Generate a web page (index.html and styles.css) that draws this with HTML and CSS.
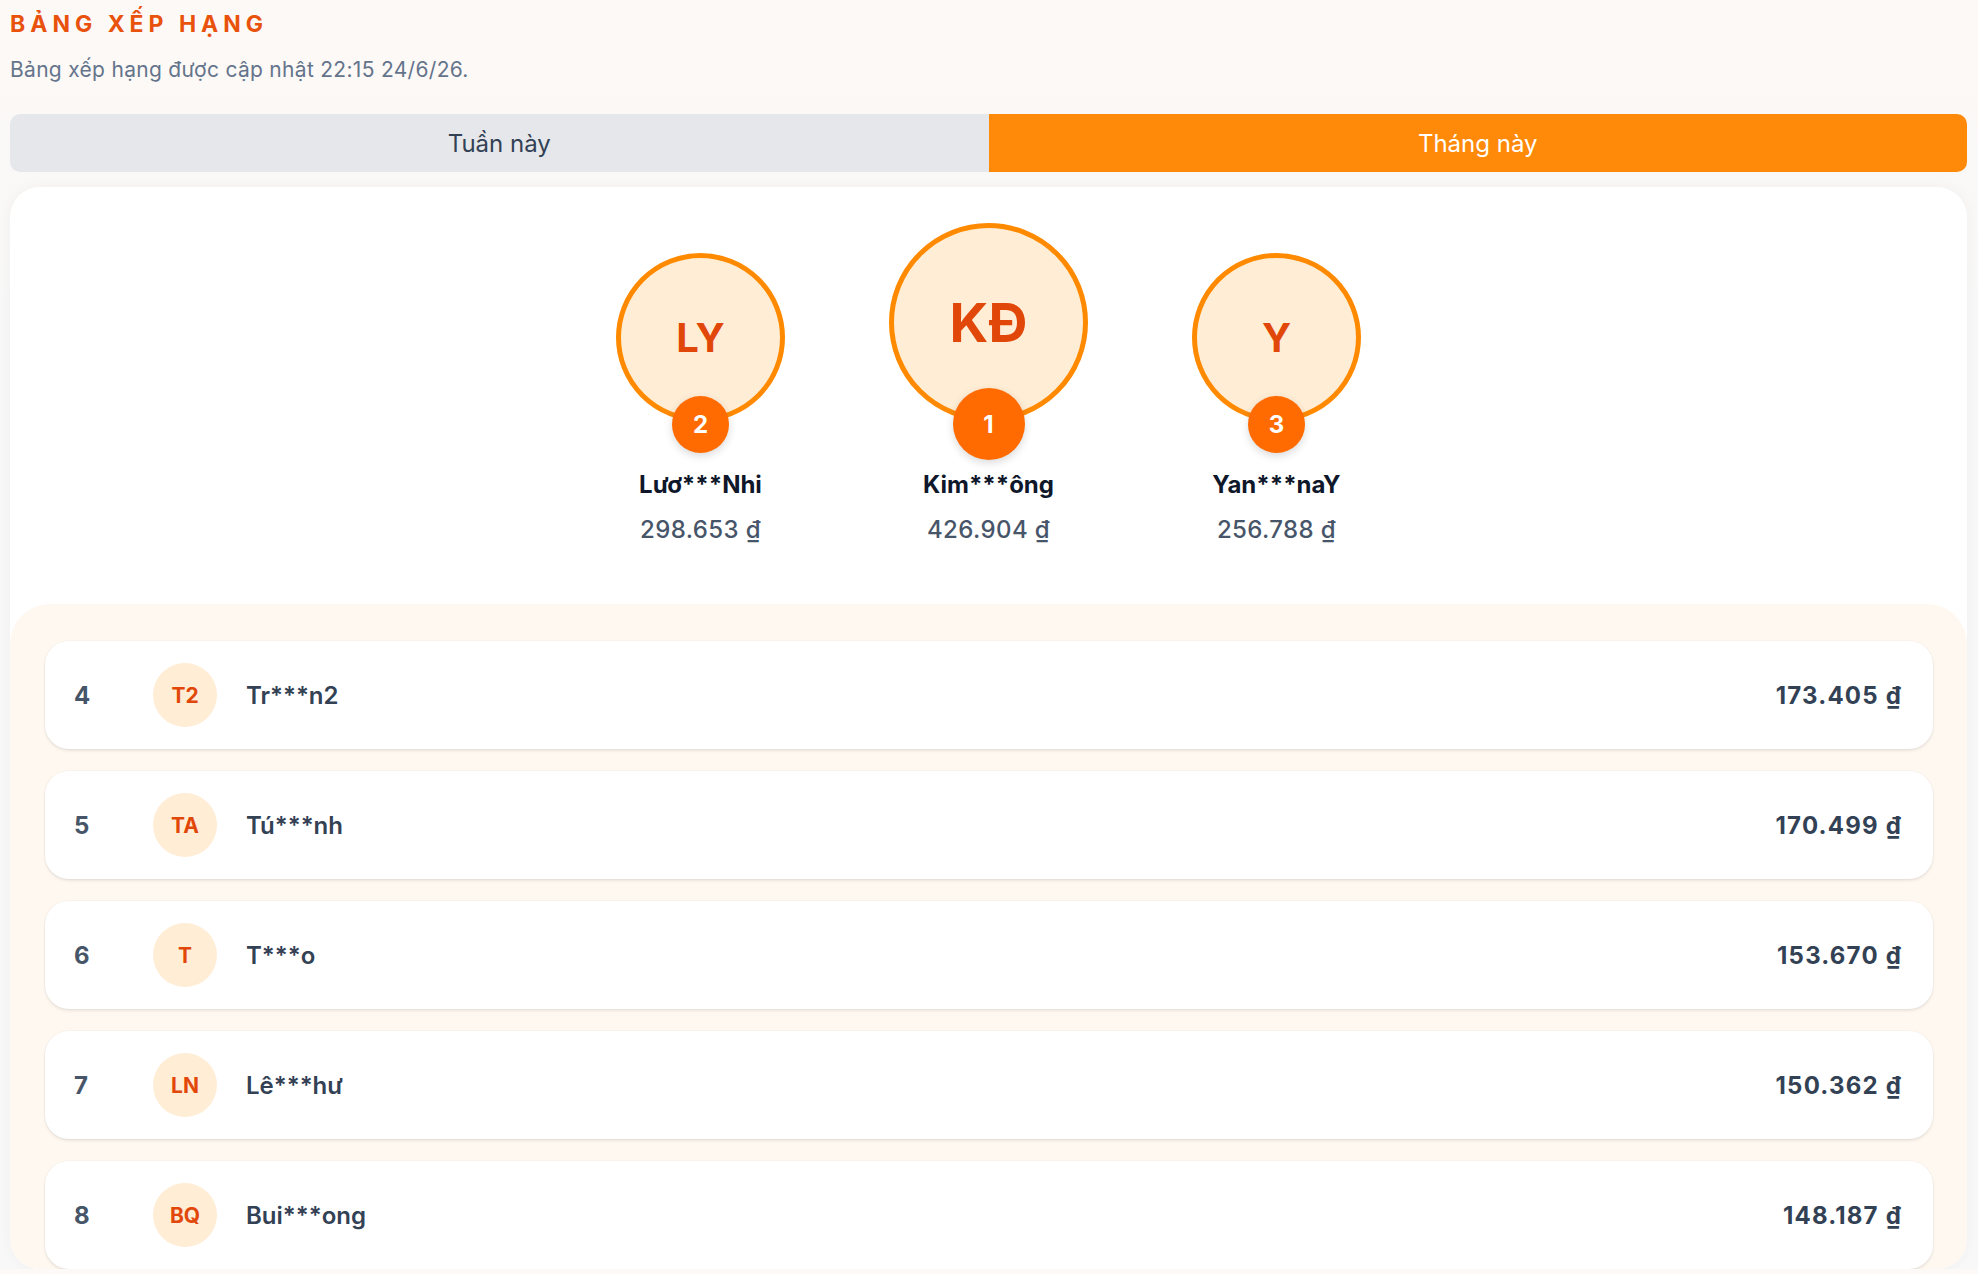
FILE: index.html
```html
<!DOCTYPE html>
<html lang="vi">
<head>
    <meta charset="UTF-8">
    <meta name="viewport" content="width=device-width, initial-scale=1.0">
    <title>Bảng xếp hạng</title>
    <link rel="stylesheet" href="styles.css">
</head>
<body>
    <div class="page">
        <h1 class="title">BẢNG XẾP HẠNG</h1>
        <p class="updated">Bảng xếp hạng được cập nhật 22:15 24/6/26.</p>

        <div class="tabs">
            <button class="tab">Tuần này</button>
            <button class="tab active">Tháng này</button>
        </div>

        <div class="board">
            <!-- top 3 -->
            <div class="podium">
                <div class="podium-item">
                    <div class="podium-avatar">
                        <span>LY</span>
                        <div class="badge">2</div>
                    </div>
                    <div class="podium-name">Lươ***Nhi</div>
                    <div class="podium-amount">298.653 ₫</div>
                </div>
                <div class="podium-item first">
                    <div class="podium-avatar">
                        <span>KĐ</span>
                        <div class="badge">1</div>
                    </div>
                    <div class="podium-name">Kim***ông</div>
                    <div class="podium-amount">426.904 ₫</div>
                </div>
                <div class="podium-item">
                    <div class="podium-avatar">
                        <span>Y</span>
                        <div class="badge">3</div>
                    </div>
                    <div class="podium-name">Yan***naY</div>
                    <div class="podium-amount">256.788 ₫</div>
                </div>
            </div>

            <!-- rest of the ranking -->
            <div class="list">
                <div class="row">
                    <span class="rank">4</span>
                    <span class="avatar">T2</span>
                    <span class="name">Tr***n2</span>
                    <span class="amount">173.405 ₫</span>
                </div>
                <div class="row">
                    <span class="rank">5</span>
                    <span class="avatar">TA</span>
                    <span class="name">Tú***nh</span>
                    <span class="amount">170.499 ₫</span>
                </div>
                <div class="row">
                    <span class="rank">6</span>
                    <span class="avatar">T</span>
                    <span class="name">T***o</span>
                    <span class="amount">153.670 ₫</span>
                </div>
                <div class="row">
                    <span class="rank">7</span>
                    <span class="avatar">LN</span>
                    <span class="name">Lê***hư</span>
                    <span class="amount">150.362 ₫</span>
                </div>
                <div class="row">
                    <span class="rank">8</span>
                    <span class="avatar">BQ</span>
                    <span class="name">Bui***ong</span>
                    <span class="amount">148.187 ₫</span>
                </div>
            </div>
        </div>
    </div>
</body>
</html>
```

FILE: styles.css
```css
body {
    margin: 0;
    padding: 0;
    font-family: Inter, "Noto Sans", sans-serif;
    background: linear-gradient(180deg, #fdf9f6 0, #f8f8f8 320px);
    color: #334155;
}

.page {
    padding: 10px 11px 0 10px;
}

.title {
    margin: 0;
    font-size: 23px;
    line-height: 28px;
    font-weight: 700;
    letter-spacing: 5px;
    color: #e8520c;
}

.updated {
    margin: 18px 0 0;
    font-size: 21px;
    line-height: 28px;
    letter-spacing: 0.3px;
    color: #64748b;
}

.tabs {
    display: flex;
    margin-top: 30px;
    border-radius: 10px;
    overflow: hidden;
}

.tab {
    flex: 1;
    height: 58px;
    border: none;
    font-family: inherit;
    font-size: 24px;
    background-color: #e5e7eb;
    color: #334155;
    cursor: pointer;
}

.tab.active {
    background-color: #ff8a0a;
    color: white;
}

.board {
    margin-top: 15px;
    background-color: white;
    border-radius: 30px;
    box-shadow: 0 0 14px rgba(0, 0, 0, 0.04);
    overflow: hidden;
}

.podium {
    display: flex;
    justify-content: center;
    align-items: flex-end;
    gap: 48px;
    padding-top: 36px;
}

.podium-item {
    width: 240px;
    display: flex;
    flex-direction: column;
    align-items: center;
}

.podium-avatar {
    position: relative;
    width: 169px;
    height: 169px;
    box-sizing: border-box;
    border: 5px solid #ff8a00;
    border-radius: 50%;
    background-color: #ffedd5;
    display: flex;
    justify-content: center;
    align-items: center;
    font-size: 40px;
    font-weight: 700;
    color: #e2470a;
    margin-bottom: 48px;
}

.first .podium-avatar {
    width: 199px;
    height: 199px;
    font-size: 54px;
}

.badge {
    position: absolute;
    left: 50%;
    bottom: -36px;
    width: 57px;
    height: 57px;
    margin-left: -28.5px;
    border-radius: 50%;
    background-color: #ff6b00;
    color: white;
    font-size: 24px;
    font-weight: 700;
    display: flex;
    justify-content: center;
    align-items: center;
    box-shadow: 0 3px 8px rgba(0, 0, 0, 0.15);
}

.first .badge {
    width: 72px;
    height: 72px;
    margin-left: -36px;
    bottom: -43px;
}

.podium-name {
    font-size: 24px;
    line-height: 30px;
    font-weight: 700;
    color: #0f172a;
}

.podium-amount {
    margin-top: 15px;
    font-size: 24px;
    line-height: 30px;
    font-weight: 500;
    letter-spacing: 0.4px;
    color: #475569;
}

.list {
    margin-top: 59px;
    background-color: #fff8f1;
    border-radius: 40px 40px 0 0;
    padding: 37px 34px 0 35px;
    display: flex;
    flex-direction: column;
    gap: 22px;
}

.row {
    display: flex;
    align-items: center;
    height: 108px;
    padding: 0 31px 0 29px;
    background-color: white;
    border-radius: 24px;
    box-shadow: 0 2px 3px rgba(0, 0, 0, 0.08), 0 0 0 1px rgba(0, 0, 0, 0.025);
}

.rank {
    width: 79px;
    font-size: 24px;
    font-weight: 700;
    color: #475569;
}

.avatar {
    width: 64px;
    height: 64px;
    border-radius: 50%;
    background-color: #ffedd5;
    color: #e2470a;
    font-size: 21px;
    font-weight: 700;
    display: flex;
    justify-content: center;
    align-items: center;
}

.name {
    margin-left: 29px;
    flex: 1;
    font-size: 24px;
    font-weight: 600;
    color: #334155;
}

.amount {
    font-size: 24px;
    font-weight: 700;
    letter-spacing: 1.2px;
    color: #334155;
}
```
